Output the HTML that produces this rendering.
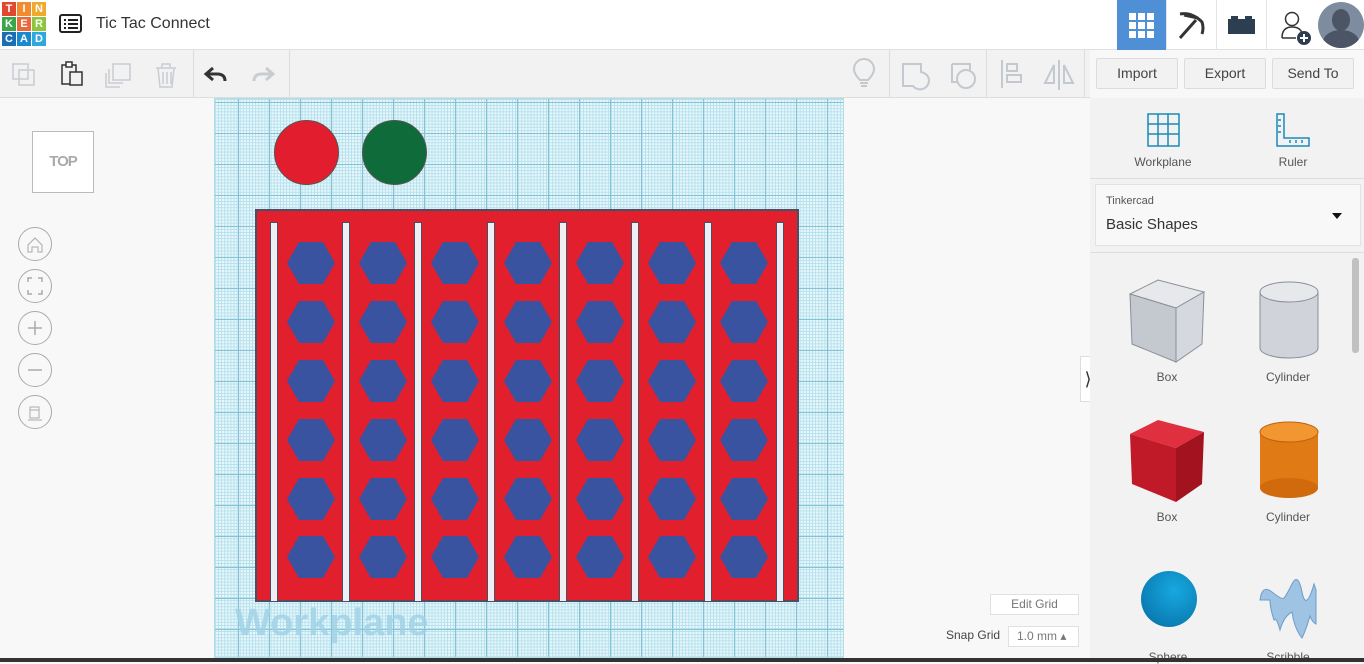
<!DOCTYPE html>
<html><head><meta charset="utf-8"><style>
*{margin:0;padding:0;box-sizing:border-box}
body{width:1364px;height:662px;overflow:hidden;background:#f8f8f8;font-family:"Liberation Sans",sans-serif;position:relative}
.abs{position:absolute}
.top{left:0;top:0;width:1364px;height:50px;background:#fff;border-bottom:1px solid #e0e0e0}
.tool{left:0;top:50px;width:1090px;height:48px;background:#f2f2f2;border-bottom:1px solid #ddd}
.btn{top:58px;height:31px;border:1px solid #dcdcdc;background:#f2f2f2;font-size:14px;color:#444;text-align:center;line-height:29px;border-radius:2px}
.grid{left:214px;top:98px;width:630px;height:560px;background-color:#e8f7fb;
background-image:linear-gradient(#86c2d4 1px,transparent 1px),linear-gradient(90deg,#86c2d4 1px,transparent 1px),linear-gradient(#b4e0ec 1px,transparent 1px),linear-gradient(90deg,#b4e0ec 1px,transparent 1px);
background-size:31px 31px,31px 31px,3.1px 3.1px,3.1px 3.1px;background-position:-8px 3px,-8px 3px,0 0,0 0;border:1px solid #b5dbe6}
.circ{width:32px;height:32px;border-radius:50%;border:1px solid #555;position:absolute}
.side{left:1090px;top:98px;width:274px;height:560px;background:#f2f2f2}
.lbl{font-size:12px;color:#555;text-align:center;position:absolute}
</style></head><body>
<div class="abs top"></div>
<div class="abs" style="left:2px;top:2px;width:44px;height:45px;display:grid;grid-template-columns:repeat(3,14px);grid-template-rows:repeat(3,14px);gap:1px;font:bold 11px 'Liberation Sans',sans-serif;color:#fff;text-align:center;line-height:14px">
<div style="background:#e2472f">T</div><div style="background:#f08c2e">I</div><div style="background:#f0a92f">N</div>
<div style="background:#3aa64a">K</div><div style="background:#e86a3b">E</div><div style="background:#8cc63f">R</div>
<div style="background:#1a6eb5">C</div><div style="background:#1a8ad0">A</div><div style="background:#2fa8e0">D</div></div>
<svg class="abs" style="left:59px;top:14px" width="24" height="20"><rect x="1" y="1" width="21" height="17" rx="2" fill="none" stroke="#222" stroke-width="2"/><g fill="#222"><rect x="5" y="5" width="2" height="2"/><rect x="5" y="9" width="2" height="2"/><rect x="5" y="13" width="2" height="2"/><rect x="9" y="5" width="10" height="2"/><rect x="9" y="9" width="10" height="2"/><rect x="9" y="13" width="10" height="2"/></g></svg>
<div class="abs" style="left:96px;top:15px;font-size:16px;color:#333">Tic Tac Connect</div>
<div class="abs" style="left:1117px;top:0;width:49px;height:50px;background:#4f8fd6"></div>
<svg class="abs" style="left:1129px;top:13px" width="25" height="25"><g fill="#fff"><rect x="0" y="0" width="7" height="7"/><rect x="9" y="0" width="7" height="7"/><rect x="18" y="0" width="7" height="7"/><rect x="0" y="9" width="7" height="7"/><rect x="9" y="9" width="7" height="7"/><rect x="18" y="9" width="7" height="7"/><rect x="0" y="18" width="7" height="7"/><rect x="9" y="18" width="7" height="7"/><rect x="18" y="18" width="7" height="7"/></g></svg>
<div class="abs" style="left:1166px;top:0;width:1px;height:50px;background:#e5e5e5"></div>
<svg class="abs" style="left:1176px;top:10px" width="32" height="32"><path d="M4 4 Q16 2 26 12 Q28 18 26 24 M8 5 L22 8 M20 10 L4 28" fill="none" stroke="#333" stroke-width="3"/></svg>
<div class="abs" style="left:1216px;top:0;width:1px;height:50px;background:#e5e5e5"></div>
<svg class="abs" style="left:1228px;top:15px" width="28" height="20"><rect x="0" y="4" width="27" height="15" fill="#2d3e50"/><rect x="3" y="1" width="7" height="5" fill="#2d3e50"/><rect x="17" y="1" width="7" height="5" fill="#2d3e50"/></svg>
<div class="abs" style="left:1266px;top:0;width:1px;height:50px;background:#e5e5e5"></div>
<svg class="abs" style="left:1280px;top:10px" width="34" height="36"><circle cx="12" cy="9" r="6.5" fill="none" stroke="#333" stroke-width="1.5"/><path d="M2 28 Q2 17 12 17 Q20 17 22 23 M2 28 H16" fill="none" stroke="#333" stroke-width="1.5"/><circle cx="24" cy="28" r="7" fill="#2d3e50"/><path d="M24 24v8M20 28h8" stroke="#fff" stroke-width="2"/></svg>
<div class="abs" style="left:1318px;top:2px;width:46px;height:46px;border-radius:50%;background:#7d8c9e;overflow:hidden"><div style="position:absolute;left:14px;top:7px;width:18px;height:22px;border-radius:50%;background:#4b5565"></div><div style="position:absolute;left:5px;top:28px;width:36px;height:24px;border-radius:50%;background:#4b5565"></div></div>
<div class="abs tool"></div>
<svg class="abs" style="left:10px;top:60px" width="270" height="30" fill="none" stroke-width="1.5">
<g stroke="#c8cdd2"><rect x="3" y="4" width="15" height="15"/><rect x="9" y="10" width="15" height="15"/></g>
<g stroke="#333"><rect x="52" y="5" width="14" height="19"/><rect x="56" y="2" width="6" height="5" fill="#fff"/><rect x="60" y="12" width="12" height="13" fill="#f2f2f2"/></g>
<g stroke="#c8cdd2"><rect x="103" y="4" width="17" height="16"/><path d="M99 9v14h14 M96 13v14h14"/></g>
<g stroke="#c8cdd2"><path d="M146 8h20 M152 8V4h8v4 M148 8l2 19h12l2-19 M153 12v12M157 12v12M161 12v12"/></g>
<path d="M197 14h10q8 0 8 7 M203 8l-7 6 7 6" stroke="#333" stroke-width="3"/>
<path d="M262 14h-10q-8 0-8 7 M256 8l7 6-7 6" stroke="#c8cdd2" stroke-width="3"/>
</svg>
<div class="abs" style="left:193px;top:50px;width:1px;height:48px;background:#ddd"></div>
<div class="abs" style="left:289px;top:50px;width:1px;height:48px;background:#ddd"></div>
<div class="abs" style="left:889px;top:50px;width:1px;height:48px;background:#ddd"></div>
<div class="abs" style="left:986px;top:50px;width:1px;height:48px;background:#ddd"></div>
<div class="abs" style="left:1084px;top:50px;width:1px;height:48px;background:#ddd"></div>
<svg class="abs" style="left:850px;top:58px" width="230" height="34" fill="none" stroke="#c3c9cf" stroke-width="2">
<path d="M10 22q-6-6-6-11a10 10 0 0 1 20 0q0 5-6 11z M10 25h8 M11 28h6"/>
<path d="M53 6h18v8q8 2 8 9a9 9 0 0 1-16 5h-10z"/>
<path d="M102 6h18v6 M102 6v18h6"/><circle cx="116" cy="21" r="9"/>
<path d="M152 2v28 M157 6h10v7h-10z M157 17h14v7h-14z"/>
<path d="M209 2v30 M204 7l-9 18h9z M214 7l9 18h-9z"/>
</svg>
<div class="abs btn" style="left:1096px;width:82px">Import</div>
<div class="abs btn" style="left:1184px;width:82px">Export</div>
<div class="abs btn" style="left:1272px;width:82px">Send To</div>
<div class="abs" style="left:32px;top:131px;width:62px;height:62px;border:1px solid #bbb;background:#fff;font-size:15px;font-weight:bold;color:#aaa;text-align:center;line-height:60px;letter-spacing:-1px">TOP</div>
<svg class="abs" style="left:17px;top:226px" width="38" height="206" fill="none" stroke="#aaa" stroke-width="1">
<circle cx="18" cy="18" r="16.5"/><circle cx="18" cy="60" r="16.5"/><circle cx="18" cy="102" r="16.5"/><circle cx="18" cy="144" r="16.5"/><circle cx="18" cy="186" r="16.5"/>
<path d="M11 19l7-7 7 7v7h-4v-5h-6v5h-4z"/>
<path d="M11 56v-4h4 M21 52h4v4 M25 64v4h-4 M15 68h-4v-4" stroke-width="1.5"/>
<path d="M11 102h14 M18 95v14" stroke-width="1.5"/>
<path d="M11 144h14" stroke-width="1.5"/>
<path d="M13 181h9v11h-9z M11 194h14 M13 184h9"/>
</svg>
<div class="abs grid">
<div style="position:absolute;left:20px;top:503px;font-size:38px;font-weight:bold;color:#9fd1e6;opacity:.8">Workplane</div>
<div class="circ" style="left:59px;top:21px;width:65px;height:65px;background:#e21d2d"></div>
<div class="circ" style="left:147px;top:21px;width:65px;height:65px;background:#0f6b3a"></div>
<div style="position:absolute;left:40px;top:110px;width:544px;height:393px;background:#e11f2d;border:2px solid #4a4f63"></div>
</div>
<svg class="abs" style="left:254px;top:208px" width="544" height="394">
<g fill="#eeeef3" stroke="#4a4f63" stroke-width="1">
<rect x="16.5" y="14.5" width="7" height="379"/><rect x="88.5" y="14.5" width="7" height="379"/><rect x="160.5" y="14.5" width="7" height="379"/><rect x="233.5" y="14.5" width="7" height="379"/><rect x="305.5" y="14.5" width="7" height="379"/><rect x="377.5" y="14.5" width="7" height="379"/><rect x="450.5" y="14.5" width="7" height="379"/><rect x="522.5" y="14.5" width="7" height="379"/>
</g>
<defs><polygon id="h" points="-24,0 -12,-21 12,-21 24,0 12,21 -12,21" fill="#3a53a0"/></defs>
<g>
<g transform="translate(57,0)"><use href="#h" y="55"/><use href="#h" y="114"/><use href="#h" y="173"/><use href="#h" y="232"/><use href="#h" y="291"/><use href="#h" y="349"/></g>
<g transform="translate(129,0)"><use href="#h" y="55"/><use href="#h" y="114"/><use href="#h" y="173"/><use href="#h" y="232"/><use href="#h" y="291"/><use href="#h" y="349"/></g>
<g transform="translate(201,0)"><use href="#h" y="55"/><use href="#h" y="114"/><use href="#h" y="173"/><use href="#h" y="232"/><use href="#h" y="291"/><use href="#h" y="349"/></g>
<g transform="translate(274,0)"><use href="#h" y="55"/><use href="#h" y="114"/><use href="#h" y="173"/><use href="#h" y="232"/><use href="#h" y="291"/><use href="#h" y="349"/></g>
<g transform="translate(346,0)"><use href="#h" y="55"/><use href="#h" y="114"/><use href="#h" y="173"/><use href="#h" y="232"/><use href="#h" y="291"/><use href="#h" y="349"/></g>
<g transform="translate(418,0)"><use href="#h" y="55"/><use href="#h" y="114"/><use href="#h" y="173"/><use href="#h" y="232"/><use href="#h" y="291"/><use href="#h" y="349"/></g>
<g transform="translate(490,0)"><use href="#h" y="55"/><use href="#h" y="114"/><use href="#h" y="173"/><use href="#h" y="232"/><use href="#h" y="291"/><use href="#h" y="349"/></g>
</g>
</svg>
<div class="abs" style="left:990px;top:594px;width:89px;height:21px;border:1px solid #e0e0e0;background:#fff;font-size:12px;color:#777;text-align:center;line-height:19px">Edit Grid</div>
<div class="abs" style="left:946px;top:628px;font-size:12px;color:#444">Snap Grid</div>
<div class="abs" style="left:1008px;top:626px;width:71px;height:21px;border:1px solid #e0e0e0;background:#fff;font-size:12px;color:#777;line-height:19px;padding-left:8px">1.0 mm &#9652;</div>
<div class="abs" style="left:1080px;top:356px;width:16px;height:46px;background:#fff;border:1px solid #ddd;font-size:18px;line-height:44px;text-align:center;color:#333">&#10217;</div>
<div class="abs side"></div>
<svg class="abs" style="left:1145px;top:112px" width="36" height="36" fill="none" stroke="#1a8ab8" stroke-width="1.5"><path d="M3 2h31v32h-31z M3 12h31 M3 22h31 M13 2v32 M23 2v32" /></svg>
<div class="lbl" style="left:1125px;top:155px;width:76px">Workplane</div>
<svg class="abs" style="left:1274px;top:112px" width="38" height="38" fill="none" stroke="#1a8ab8" stroke-width="1.5"><path d="M3 2h7v24h25v8h-32z M4 8h3 M4 14h3 M4 20h3 M16 28v3 M22 28v3 M28 28v3"/></svg>
<div class="lbl" style="left:1262px;top:155px;width:62px">Ruler</div>
<div class="abs" style="left:1090px;top:178px;width:274px;height:1px;background:#ddd"></div>
<div class="abs" style="left:1095px;top:184px;width:266px;height:62px;background:#f8f8f8;border:1px solid #e2e2e2"></div>
<div class="abs" style="left:1106px;top:195px;font-size:11px;color:#555">Tinkercad</div>
<div class="abs" style="left:1106px;top:216px;font-size:15px;color:#333">Basic Shapes</div>
<div class="abs" style="left:1332px;top:213px;width:0;height:0;border-left:5px solid transparent;border-right:5px solid transparent;border-top:6px solid #111"></div>
<div class="abs" style="left:1090px;top:252px;width:274px;height:1px;background:#ddd"></div>
<div class="abs" style="left:1352px;top:258px;width:7px;height:95px;background:#c1c1c1;border-radius:3px"></div>
<svg class="abs" style="left:1128px;top:278px" width="78" height="86"><polygon points="2,16 30,2 76,14 48,30" fill="#e6e8ec" stroke="#8a8f99"/><polygon points="2,16 48,30 48,84 4,66" fill="#c4c8cf" stroke="#8a8f99"/><polygon points="48,30 76,14 74,66 48,84" fill="#d5d8de" stroke="#8a8f99"/></svg>
<div class="lbl" style="left:1128px;top:370px;width:78px">Box</div>
<svg class="abs" style="left:1258px;top:280px" width="62" height="80"><rect x="2" y="12" width="58" height="56" fill="#d0d3d9" stroke="#8a8f99"/><ellipse cx="31" cy="68" rx="29" ry="10" fill="#d0d3d9" stroke="#8a8f99"/><rect x="2.5" y="12" width="57" height="56" fill="#d0d3d9"/><ellipse cx="31" cy="12" rx="29" ry="10" fill="#e6e8ec" stroke="#8a8f99"/></svg>
<div class="lbl" style="left:1250px;top:370px;width:76px">Cylinder</div>
<svg class="abs" style="left:1128px;top:418px" width="78" height="86"><polygon points="2,16 30,2 76,14 48,30" fill="#e03040"/><polygon points="2,16 48,30 48,84 4,66" fill="#c01a28"/><polygon points="48,30 76,14 74,66 48,84" fill="#a3131f"/></svg>
<div class="lbl" style="left:1128px;top:510px;width:78px">Box</div>
<svg class="abs" style="left:1258px;top:420px" width="62" height="80"><rect x="2" y="12" width="58" height="56" fill="#e07a14"/><ellipse cx="31" cy="68" rx="29" ry="10" fill="#d06a0c"/><ellipse cx="31" cy="12" rx="29" ry="10" fill="#f29632" stroke="#c06010"/></svg>
<div class="lbl" style="left:1250px;top:510px;width:76px">Cylinder</div>
<div class="abs" style="left:1141px;top:571px;width:56px;height:56px;border-radius:50%;background:radial-gradient(circle at 60% 35%,#17a8e0,#0a7fb5 70%,#0a6a99)"></div>
<svg class="abs" style="left:1256px;top:578px" width="64" height="62"><path d="M4 22q2-16 12-8t12 6 8-14 10 8 12-8l2 6v34q-4-2-6-8-4 14-8 22-8-10-10-26-8 4-12 18-4-14-6-10-4-12-4-20z" fill="#9fc3e3" stroke="#6d9cc6"/></svg>
<div class="lbl" style="left:1130px;top:650px;width:76px">Sphere</div>
<div class="lbl" style="left:1250px;top:650px;width:76px">Scribble</div>
<div class="abs" style="left:0;top:658px;width:1364px;height:4px;background:#333"></div>
</body></html>
